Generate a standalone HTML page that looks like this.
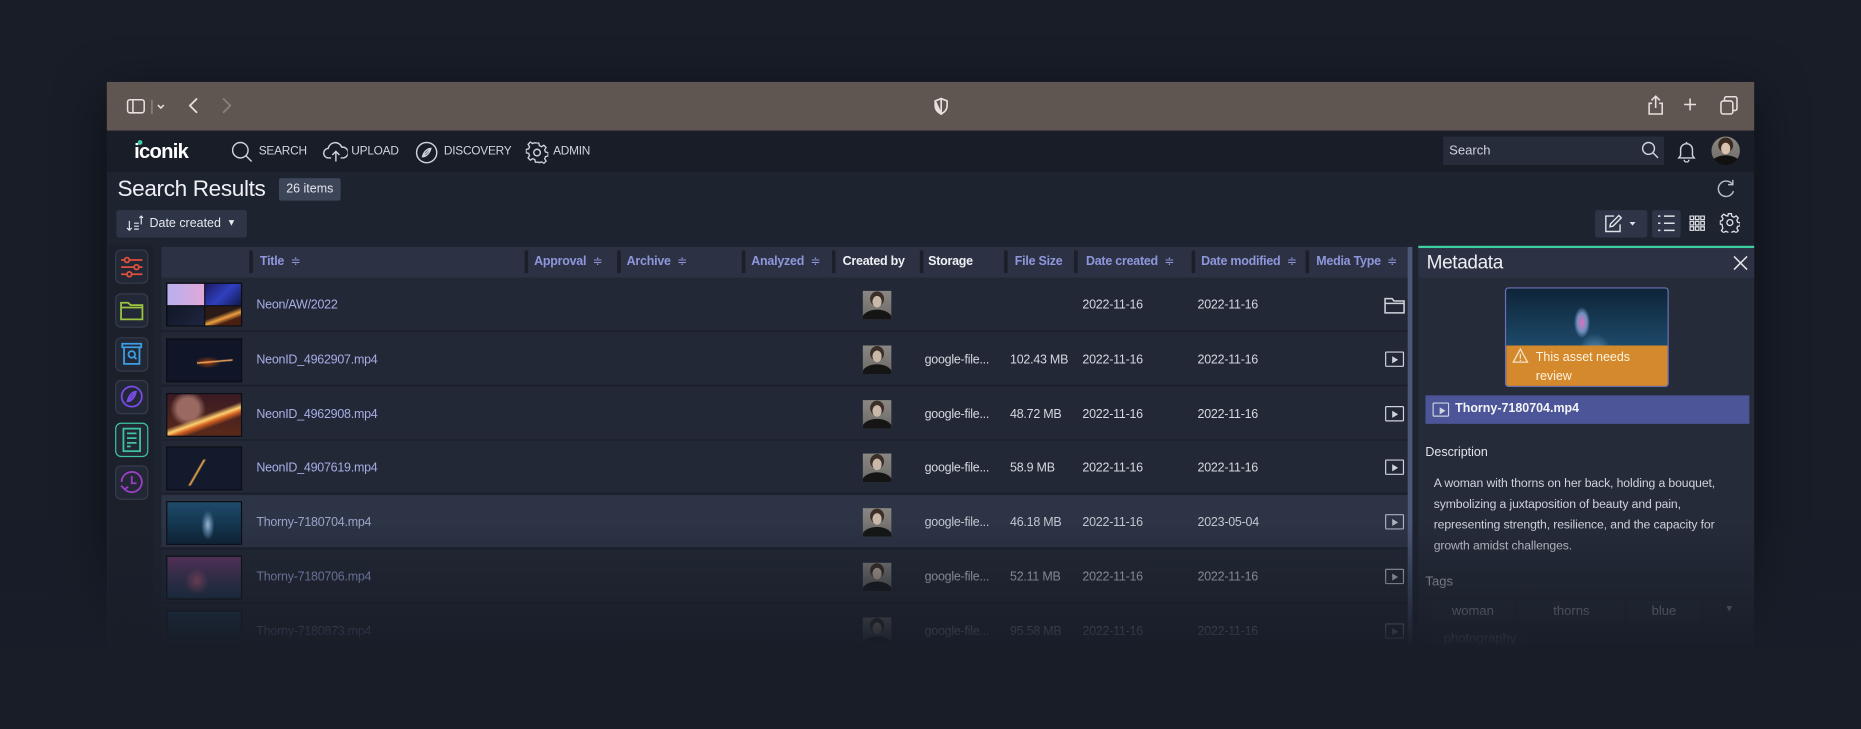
<!DOCTYPE html>
<html><head><meta charset="utf-8"><style>
*{margin:0;padding:0;box-sizing:border-box}
html,body{width:1861px;height:729px;overflow:hidden;background:#181d28}
#s{position:absolute;left:0;top:0;width:1568px;height:614px;transform:scale(1.18686,1.1873);transform-origin:0 0;font-family:"Liberation Sans",sans-serif;color:#d8dbe3}
.a{position:absolute}
.win{left:90px;top:69px;width:1388px;height:500px;background:#1e2330;box-shadow:0 10px 40px rgba(0,0,0,.5)}
.tb{left:90px;top:69px;width:1388px;height:41px;background:#5f5651}
.nav{left:90px;top:110px;width:1388px;height:35px;background:#191d27}
.navt{font-size:10px;color:#d0d4de;top:122px;letter-spacing:-0.2px}
.hdr{left:136px;top:208px;width:1050px;height:26px;background:#2c3244}
.hd{top:214px;font-size:10.5px;font-weight:bold;color:#8f97dc;letter-spacing:-0.2px}
.hd span{font-weight:normal;font-size:10px}
.sep{top:211px;width:3px;height:19px;background:#1a1f2a}
.row{left:136px;width:1050px;height:45px;background:#232836;border-bottom:1px solid #1b1f2a}
.t{font-size:10.5px;color:#d5d8e0;letter-spacing:-0.2px}
.tt{font-size:10.5px;color:#a7aee6;letter-spacing:-0.2px}
.th{position:absolute;left:140px;width:64px;height:37px;border:1px solid #0c0e14;overflow:hidden}
.av{position:absolute;left:727px;width:24px;height:24px;background:radial-gradient(ellipse 22% 28% at 50% 38%,#c9b8a8 0 70%,transparent 75%),radial-gradient(ellipse 28% 30% at 50% 28%,#3b2f28 0 85%,transparent 90%),radial-gradient(ellipse 55% 35% at 50% 100%,#151515 0 95%,transparent 100%),linear-gradient(#8a8784,#6b6a67)}
.mi{position:absolute;left:1167px;width:16px;height:13px;border:1.4px solid #cfd3dc;border-radius:1px}
.mi:after{content:"";position:absolute;left:5px;top:2.5px;border-left:5px solid #cfd3dc;border-top:3px solid transparent;border-bottom:3px solid transparent}
.sb{position:absolute;left:97px;width:28px;height:29px;border:1px solid #353c4c;border-radius:5px;background:#222836}
.chip{position:absolute;top:506px;height:18px;background:#2a3040;font-size:11px;color:#c6cad4;text-align:center;line-height:18px}
</style></head><body><div id="s">
<div class="a win"></div>
<div class="a tb"></div>
<svg class="a" style="left:106px;top:82px" width="44" height="16" viewBox="0 0 44 16" fill="none" stroke="#e6e1dc" stroke-width="1.3"><rect x="1.5" y="2" width="14" height="11" rx="2"/><line x1="6" y1="2" x2="6" y2="13"/><line x1="22" y1="2" x2="22" y2="14" stroke="#8a817c"/><path d="M27 6.5l2.5 2.5 2.5-2.5" /></svg>
<svg class="a" style="left:157px;top:81px" width="40" height="16" fill="none" stroke-width="1.5"><path d="M9 2L3 8l6 6" stroke="#e6e1dc"/><path d="M31 2l6 6-6 6" stroke="#8a817c"/></svg>
<svg class="a" style="left:786px;top:82px" width="14" height="15" fill="none" stroke="#e6e1dc" stroke-width="1.4"><path d="M7 1L2 3v4c0 3 2 5.5 5 7 3-1.5 5-4 5-7V3z"/><path d="M7 1v13L2 3v4c0 3 2 5.5 5 7z" fill="#e6e1dc"/></svg>
<svg class="a" style="left:1386px;top:79px" width="80" height="19" fill="none" stroke="#e6e1dc" stroke-width="1.3"><path d="M9 2v10M5.5 5.5L9 2l3.5 3.5M6 8H3.5v9h11V8H12"/><path d="M38 4v10M33 9h10"/><rect x="64" y="6" width="10" height="11" rx="2"/><path d="M67 6V4a1.5 1.5 0 011.5-1.5H76A1.5 1.5 0 0177.5 4v8.5A1.5 1.5 0 0176 14h-2"/></svg>
<div class="a nav"></div>
<div class="a" style="left:113px;top:118px;font-size:17px;font-weight:bold;color:#fff;letter-spacing:-0.6px">iconik</div>
<div class="a" style="left:115.5px;top:117.5px;width:4px;height:4px;border-radius:50%;background:#3fd0a6"></div>
<svg class="a" style="left:195px;top:119px" width="18" height="18" fill="none" stroke="#cfd3dc" stroke-width="1.2"><circle cx="7.5" cy="7.5" r="6.5"/><path d="M12 12l5 5"/></svg>
<div class="a navt" style="left:218px">SEARCH</div>
<svg class="a" style="left:272px;top:119px" width="21" height="18" fill="none" stroke="#cfd3dc" stroke-width="1.2"><path d="M7 14H5a4 4 0 01-.5-8A6 6 0 0116 5a4.5 4.5 0 011.5 9H15"/><path d="M11 17V8.5M8 11.5l3-3 3 3"/></svg>
<div class="a navt" style="left:296px">UPLOAD</div>
<svg class="a" style="left:350px;top:119px" width="19" height="19" fill="none" stroke="#cfd3dc" stroke-width="1.2"><circle cx="9.5" cy="9.5" r="8.5"/><path d="M13 6c-3 0-6 3-7 7 3 0 6-3 7-7zM6 13l7-7"/></svg>
<div class="a navt" style="left:374px">DISCOVERY</div>
<svg class="a" style="left:443px;top:119px" width="19" height="19" fill="none" stroke="#cfd3dc" stroke-width="1.2"><circle cx="9.5" cy="9.5" r="2.8"/><path d="M8 1h3l.5 2.3 1.9 1 2.1-1.3 2 2-1.3 2.1.8 1.9 2.3.5v3l-2.3.5-.8 1.9 1.3 2.1-2 2-2.1-1.3-1.9.8L11 18H8l-.5-2.3-1.9-.8-2.1 1.3-2-2 1.3-2.1L2 10.2-.3 9.7v-3L2 6.2l.8-1.9L1.5 2.2l2-2 2.1 1.3 1.9-.8z" transform="translate(.5 .5) scale(.95)"/></svg>
<div class="a navt" style="left:466px">ADMIN</div>
<div class="a" style="left:1216px;top:115px;width:186px;height:24px;background:#262c3a"></div>
<div class="a" style="left:1221px;top:121px;font-size:11px;color:#cfd3dc">Search</div>
<svg class="a" style="left:1383px;top:119px" width="15" height="15" fill="none" stroke="#cfd3dc" stroke-width="1.2"><circle cx="6" cy="6" r="5"/><path d="M9.7 9.7L14 14"/></svg>
<svg class="a" style="left:1413px;top:118px" width="16" height="19" fill="none" stroke="#cfd3dc" stroke-width="1.2"><path d="M8 1.5v1.5M3 13V8a5 5 0 0110 0v5l1.5 2h-13zM6 16.5a2 2 0 004 0"/></svg>
<div class="a" style="left:1442px;top:115px;width:24px;height:24px;border-radius:50%;background:radial-gradient(ellipse 22% 28% at 50% 42%,#d9c3ae 0 70%,transparent 75%),radial-gradient(ellipse 30% 30% at 50% 30%,#3a2c22 0 85%,transparent 90%),radial-gradient(ellipse 55% 35% at 50% 100%,#111 0 95%,transparent 100%),linear-gradient(#8a8680,#6f6c68)"></div>

<div class="a" style="left:99px;top:149px;font-size:19px;color:#eef0f4;letter-spacing:-0.3px">Search Results</div>
<div class="a" style="left:235px;top:150px;width:52px;height:19px;background:#3d4558;border-radius:2px;font-size:10.5px;text-align:center;line-height:19px;color:#e2e5ec">26 items</div>
<svg class="a" style="left:1446px;top:150px" width="17" height="17" fill="none" stroke="#b9bfcc" stroke-width="1.2"><path d="M13.8 5.5A6.5 6.5 0 1014.5 11"/><path d="M14 1.5v4h-4"/></svg>
<div class="a" style="left:98px;top:177px;width:110px;height:23px;background:#2e3546;border-radius:2px"></div>
<svg class="a" style="left:106px;top:180px" width="16" height="16" fill="none" stroke="#e0e3ea" stroke-width="1"><path d="M3 6v8M1 12l2 2 2-2M7 8h4M7 10.5h4M7 13h4M13 2v7M11.5 3.5L13 2l1.5 1.5"/></svg>
<div class="a" style="left:126px;top:182px;font-size:10.5px;color:#e6e9ef">Date created</div>
<div class="a" style="left:191px;top:183px;font-size:8px;color:#e6e9ef">▼</div>
<div class="a" style="left:1344px;top:177px;width:44px;height:23px;background:#2e3546;border-radius:2px"></div>
<svg class="a" style="left:1351px;top:180px" width="30" height="17" fill="none" stroke="#dfe2e8" stroke-width="1.2"><path d="M9 2H2v13h12V9"/><path d="M13 1.5l2 2-7 7-2.5.5.5-2.5z"/><path d="M22 7h5l-2.5 3z" fill="#dfe2e8" stroke="none"/></svg>
<div class="a" style="left:1392px;top:177px;width:24px;height:23px;background:#2e3546;border-radius:2px"></div>
<svg class="a" style="left:1396px;top:180px" width="16" height="16" stroke="#dfe2e8" stroke-width="1.3"><path d="M1 2h2M6 2h9M1 8h2M6 8h9M1 14h2M6 14h9"/></svg>
<svg class="a" style="left:1423px;top:181px" width="14" height="14" fill="none" stroke="#dfe2e8" stroke-width="1"><path d="M1 1h3v3H1zM5.5 1h3v3h-3zM10 1h3v3h-3zM1 5.5h3v3H1zM5.5 5.5h3v3h-3zM10 5.5h3v3h-3zM1 10h3v3H1zM5.5 10h3v3h-3zM10 10h3v3h-3z"/></svg>
<svg class="a" style="left:1449px;top:179px" width="17" height="17" fill="none" stroke="#dfe2e8" stroke-width="1.1"><circle cx="8.5" cy="8.5" r="2.5"/><path d="M7.2 1h2.6l.4 2.1 1.7.9 1.9-1.2 1.8 1.8-1.2 1.9.7 1.7 2.1.4v2.6l-2.1.4-.7 1.7 1.2 1.9-1.8 1.8-1.9-1.2-1.7.7-.4 2.1H7.2l-.4-2.1-1.7-.7-1.9 1.2-1.8-1.8 1.2-1.9L1.9 10 .3 9.8V7.2L2 6.8l.7-1.7L1.5 3.2l1.8-1.8 1.9 1.2L6.8 3z"/></svg>

<!-- sidebar -->
<div class="a" style="left:92px;top:206px;width:37px;height:340px;background:#1b202b"></div>
<div class="sb" style="top:210px"></div><svg class="a" style="left:101px;top:215px" width="20" height="20" fill="none" stroke="#e0503c" stroke-width="1.5"><path d="M1 4h18M1 10h18M1 16h18"/><circle cx="6" cy="4" r="2" fill="#222836"/><circle cx="14" cy="10" r="2" fill="#222836"/><circle cx="8" cy="16" r="2" fill="#222836"/></svg>
<div class="sb" style="top:247px"></div><svg class="a" style="left:101px;top:253px" width="20" height="18" fill="none" stroke="#9bc440" stroke-width="1.5"><path d="M1 2h6l2 2h10v12H1zM1 6h18"/></svg>
<div class="sb" style="top:284px"></div><svg class="a" style="left:102px;top:288px" width="18" height="20" fill="none" stroke="#3c9ee6" stroke-width="1.5"><path d="M1 1.5h16v3H1zM2.5 4.5h13v14h-13z"/><circle cx="9" cy="10.5" r="2.8"/><path d="M11 12.5l2 2"/></svg>
<div class="sb" style="top:320px"></div><svg class="a" style="left:101px;top:324px" width="20" height="20" fill="none" stroke="#7a4be8" stroke-width="1.5"><circle cx="10" cy="10" r="8.5"/><path d="M13.5 6c-3 0-6 3-7 8 3 0 6-3 7-8zM6.5 14l7-8"/></svg>
<div class="sb" style="top:356px;border-color:#3fc4a0"></div><svg class="a" style="left:103px;top:360px" width="16" height="21" fill="none" stroke="#3fc4a0" stroke-width="1.5"><rect x="1" y="1" width="14" height="19"/><path d="M4 5h8M4 9h8M4 13h8M4 16h3"/></svg>
<div class="sb" style="top:392px"></div><svg class="a" style="left:101px;top:396px" width="20" height="20" fill="none" stroke="#9a3ec2" stroke-width="1.5"><path d="M4 16A8.5 8.5 0 1010 1.5 8.5 8.5 0 001.5 10"/><path d="M10 5v6h4M1 13l3 3 3-2"/></svg>

<!-- table -->
<div class="a hdr"></div>
<div class="a" style="left:1186px;top:208px;width:4px;height:345px;background:#4d5878"></div>
<div class="a sep" style="left:210px"></div><div class="a hd" style="left:219px">Title &nbsp;<span>≑</span></div>
<div class="a sep" style="left:442px"></div><div class="a hd" style="left:450px">Approval &nbsp;<span>≑</span></div>
<div class="a sep" style="left:520px"></div><div class="a hd" style="left:528px">Archive &nbsp;<span>≑</span></div>
<div class="a sep" style="left:625px"></div><div class="a hd" style="left:633px">Analyzed &nbsp;<span>≑</span></div>
<div class="a sep" style="left:701px"></div><div class="a hd" style="left:710px;color:#eef0f4">Created by</div>
<div class="a sep" style="left:775px"></div><div class="a hd" style="left:782px;color:#eef0f4">Storage</div>
<div class="a sep" style="left:846px"></div><div class="a hd" style="left:855px">File Size</div>
<div class="a sep" style="left:905px"></div><div class="a hd" style="left:915px">Date created &nbsp;<span>≑</span></div>
<div class="a sep" style="left:1004px"></div><div class="a hd" style="left:1012px">Date modified &nbsp;<span>≑</span></div>
<div class="a sep" style="left:1100px"></div><div class="a hd" style="left:1109px">Media Type &nbsp;<span>≑</span></div>

<!-- row1 -->
<div class="a row" style="top:234px"></div>
<div class="th" style="top:238px;background:#0c0e14">
<div style="position:absolute;left:0;top:0;width:31px;height:18px;background:linear-gradient(90deg,#b8b0f0,#e0a8d8)"></div>
<div style="position:absolute;left:32px;top:0;width:31px;height:18px;background:linear-gradient(135deg,#1a1a60,#3040c0 50%,#101848)"></div>
<div style="position:absolute;left:0;top:19px;width:31px;height:17px;background:linear-gradient(135deg,#121828,#1e2540)"></div>
<div style="position:absolute;left:32px;top:19px;width:31px;height:17px;background:linear-gradient(160deg,#2a1a18 40%,#f0a040 55%,#4a1e10 70%)"></div></div>
<div class="a tt" style="left:216px;top:251px">Neon/AW/2022</div>
<div class="av" style="top:245px"></div>
<div class="a t" style="left:912px;top:251px">2022-11-16</div><div class="a t" style="left:1009px;top:251px">2022-11-16</div>
<svg class="a" style="left:1166px;top:250px" width="18" height="15" fill="none" stroke="#cfd3dc" stroke-width="1.3"><path d="M1 1.5h6l1.5 2H17v10H1zM1 5.5h16"/></svg>
<!-- row2 -->
<div class="a row" style="top:280px"></div>
<div class="th" style="top:285px;background:linear-gradient(175deg,transparent 47%,#ffb060 50%,transparent 53%) 25px 0/30px 37px no-repeat,radial-gradient(ellipse 25% 20% at 55% 55%,#a04010,transparent 70%),#101628"></div>
<div class="a tt" style="left:216px;top:297px">NeonID_4962907.mp4</div>
<div class="av" style="top:291px"></div>
<div class="a t" style="left:779px;top:297px">google-file...</div><div class="a t" style="left:851px;top:297px">102.43 MB</div>
<div class="a t" style="left:912px;top:297px">2022-11-16</div><div class="a t" style="left:1009px;top:297px">2022-11-16</div>
<div class="mi" style="top:296px"></div>
<!-- row3 -->
<div class="a row" style="top:326px"></div>
<div class="th" style="top:331px;background:linear-gradient(160deg,transparent 50%,#ffd070 58%,#d06020 64%,transparent 72%),radial-gradient(circle at 28% 35%,#9a6a60 0 18%,transparent 30%),linear-gradient(#3a1a24,#5a2a1a)"></div>
<div class="a tt" style="left:216px;top:343px">NeonID_4962908.mp4</div>
<div class="av" style="top:337px"></div>
<div class="a t" style="left:779px;top:343px">google-file...</div><div class="a t" style="left:851px;top:343px">48.72 MB</div>
<div class="a t" style="left:912px;top:343px">2022-11-16</div><div class="a t" style="left:1009px;top:343px">2022-11-16</div>
<div class="mi" style="top:342px"></div>
<!-- row4 -->
<div class="a row" style="top:371px"></div>
<div class="th" style="top:376px;background:linear-gradient(120deg,transparent 46%,#ffb050 50%,transparent 54%) 10px 10px/30px 22px no-repeat,#121a2c"></div>
<div class="a tt" style="left:216px;top:388px">NeonID_4907619.mp4</div>
<div class="av" style="top:382px"></div>
<div class="a t" style="left:779px;top:388px">google-file...</div><div class="a t" style="left:851px;top:388px">58.9 MB</div>
<div class="a t" style="left:912px;top:388px">2022-11-16</div><div class="a t" style="left:1009px;top:388px">2022-11-16</div>
<div class="mi" style="top:387px"></div>
<!-- row5 selected -->
<div class="a row" style="top:417px;background:#2d3446"></div>
<div class="th" style="top:422px;background:radial-gradient(ellipse 10% 40% at 55% 55%,#9ab8d8,#3a6080 60%,transparent 90%),linear-gradient(#1e4a6a,#0c2438)"></div>
<div class="a tt" style="left:216px;top:434px;color:#9da3c8">Thorny-7180704.mp4</div>
<div class="av" style="top:428px"></div>
<div class="a t" style="left:779px;top:434px;color:#c3c7d0">google-file...</div><div class="a t" style="left:851px;top:434px;color:#c3c7d0">46.18 MB</div>
<div class="a t" style="left:912px;top:434px;color:#c3c7d0">2022-11-16</div><div class="a t" style="left:1009px;top:434px;color:#c3c7d0">2023-05-04</div>
<div class="mi" style="top:433px;opacity:.8"></div>
<!-- row6 -->
<div class="a row" style="top:463px"></div>
<div class="th" style="top:468px;background:radial-gradient(ellipse 20% 40% at 40% 60%,#b05878,transparent 80%),linear-gradient(#6a3868,#1e3a58)"></div>
<div class="a tt" style="left:216px;top:480px">Thorny-7180706.mp4</div>
<div class="av" style="top:474px"></div>
<div class="a t" style="left:779px;top:480px">google-file...</div><div class="a t" style="left:851px;top:480px">52.11 MB</div>
<div class="a t" style="left:912px;top:480px">2022-11-16</div><div class="a t" style="left:1009px;top:480px">2022-11-16</div>
<div class="mi" style="top:479px"></div>
<!-- row7 -->
<div class="a row" style="top:509px"></div>
<div class="th" style="top:514px;background:linear-gradient(#23405a,#142838)"></div>
<div class="a tt" style="left:216px;top:526px">Thorny-7180873.mp4</div>
<div class="av" style="top:520px"></div>
<div class="a t" style="left:779px;top:526px">google-file...</div><div class="a t" style="left:851px;top:526px">95.58 MB</div>
<div class="a t" style="left:912px;top:526px">2022-11-16</div><div class="a t" style="left:1009px;top:526px">2022-11-16</div>
<div class="mi" style="top:525px"></div>

<!-- metadata panel -->
<div class="a" style="left:1195px;top:207px;width:283px;height:350px;background:#252b39"></div>
<div class="a" style="left:1195px;top:207px;width:283px;height:2px;background:#3ecf9e"></div>
<div class="a" style="left:1195px;top:209px;width:283px;height:25px;background:#2c3243"></div>
<div class="a" style="left:1202px;top:213px;font-size:16px;color:#eceef3;letter-spacing:-0.3px">Metadata</div>
<svg class="a" style="left:1460px;top:215px" width="13" height="13" stroke="#dfe2e8" stroke-width="1.3"><path d="M1 1l11 11M12 1L1 12"/></svg>
<div class="a" style="left:1268px;top:242px;width:138px;height:84px;border:1px solid #6a72b8;border-radius:3px;overflow:hidden;background:radial-gradient(ellipse 5% 16% at 47% 35%,#e070c0,#7090c0 60%,transparent 100%),radial-gradient(ellipse 14% 30% at 55% 70%,#6aa0c8,transparent 80%),linear-gradient(#0e2438,#1d4a6a 60%,#14344e)">
<div style="position:absolute;left:0;top:48px;width:138px;height:36px;background:#d4892c"></div></div>
<svg class="a" style="left:1274px;top:293px" width="14" height="13" fill="none" stroke="#f3e4cc" stroke-width="1.1"><path d="M7 1L1 12h12zM7 5v4M7 10v1"/></svg>
<div class="a" style="left:1294px;top:293px;font-size:10.5px;line-height:16px;color:#fff3e0">This asset needs<br>review</div>
<div class="a" style="left:1201px;top:333px;width:273px;height:24px;background:#4b5597"></div>
<div class="mi" style="left:1207px;top:339px;width:14px;height:12px"></div>
<div class="a" style="left:1226px;top:338px;font-size:10.5px;font-weight:bold;color:#f3f4f8">Thorny-7180704.mp4</div>
<div class="a" style="left:1201px;top:375px;font-size:10.5px;color:#e0e3ea">Description</div>
<div class="a" style="left:1208px;top:399px;font-size:10.3px;line-height:17.7px;color:#cfd3dc;white-space:nowrap;letter-spacing:-0.1px">A woman with thorns on her back, holding a bouquet,<br>symbolizing a juxtaposition of beauty and pain,<br>representing strength, resilience, and the capacity for<br>growth amidst challenges.</div>
<div class="a" style="left:1201px;top:484px;font-size:11px;color:#c9cdd6">Tags</div>
<div class="chip" style="left:1207px;width:68px">woman</div>
<div class="chip" style="left:1280px;width:88px">thorns</div>
<div class="chip" style="left:1372px;width:60px">blue</div>
<div class="a" style="left:1453px;top:508px;font-size:8px;color:#aab">▼</div>
<div class="chip" style="left:1207px;top:529px;width:80px">photography</div>

<!-- fade -->
<div class="a" style="left:0;top:440px;width:1568px;height:174px;background:linear-gradient(rgba(24,29,40,0) 0%,rgba(24,29,40,.35) 20%,rgba(24,29,40,.75) 45%,#181d28 62%)"></div>
</div></body></html>
